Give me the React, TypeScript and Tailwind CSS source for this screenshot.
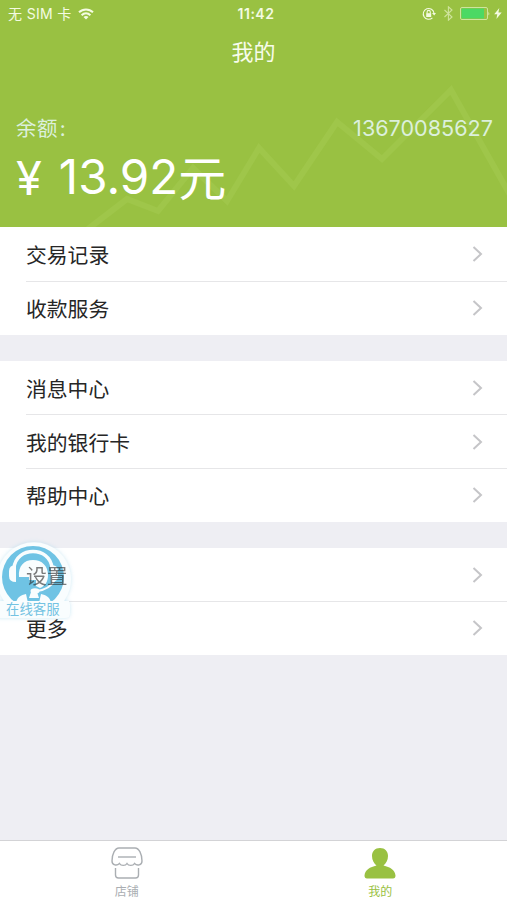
import React from "react";

const cjk = "font-['Inter','Noto_Sans_CJK_SC',sans-serif]";

function Row({
  label,
  height,
  divider,
  raised,
}: {
  label: string;
  height: string;
  divider?: boolean;
  raised?: boolean;
}) {
  return (
    <div className={`flex bg-white pl-[26px] ${height}`}>
      <div
        className={`flex flex-1 items-center justify-between pr-6 ${
          divider ? "border-b border-[#e6e6e8]" : "border-b border-transparent"
        }`}
      >
        <span
          className={`pt-[5px] text-[20.8px] leading-none text-[#262626] ${raised ? "relative z-20 opacity-60" : ""}`}
        >
          {label}
        </span>
        <svg className="h-4 w-[11px]" viewBox="0 0 11 16" fill="none" stroke="#c5c5c8" strokeWidth="2">
          <path d="M1.5 1 L9 8 L1.5 15" />
        </svg>
      </div>
    </div>
  );
}

function StatusBar() {
  return (
    <div className="relative flex h-[27px] items-center justify-between pl-2 pr-[5px] text-[#f4fbe2]">
      <div className="flex items-center gap-[6px]">
        <span className="text-[14px] leading-none tracking-[0.35px]">无 SIM 卡</span>
        <svg className="h-3 w-4" viewBox="0 0 16 12" fill="none" stroke="currentColor" strokeWidth="2">
          <path d="M1 4.3 C5 0.4 11 0.4 15 4.3" />
          <path d="M3.6 7.2 C6.2 4.7 9.8 4.7 12.4 7.2" />
          <path d="M8 11.6 L5.5 9 C7 7.7 9 7.7 10.5 9 Z" fill="currentColor" stroke="none" />
        </svg>
      </div>
      <span className="absolute left-0 w-full pl-[5px] text-center text-[14px] font-semibold leading-none tracking-[0.5px]">
        11:42
      </span>
      <div className="flex items-center">
        <svg className="mr-px h-[14px] w-[15px]" viewBox="0 0 15 14" fill="none" stroke="currentColor" strokeWidth="1.1">
          <path d="M10.4 10.8 A5.4 5.4 0 1 1 12 6.2" />
          <path d="M10 6 L14 6 L12.2 8.6 Z" fill="currentColor" stroke="none" />
          <rect x="4.2" y="6.2" width="5" height="3.8" fill="currentColor" stroke="none" />
          <path d="M5.1 6.5 V5 A1.6 1.6 0 0 1 8.3 5 V6.5" />
        </svg>
        <svg className="ml-[6px] h-[15px] w-[9px] text-[#cfe39c]" viewBox="0 0 9 15" fill="none" stroke="currentColor" strokeWidth="1.1">
          <path d="M0.5 4 L8 11 L4.4 14.2 V0.8 L8 4 L0.5 11" />
        </svg>
        <svg className="ml-[7px] h-[13px] w-[30px]" viewBox="0 0 30 13" fill="none">
          <rect x="0.5" y="0.5" width="27" height="12" rx="1.5" stroke="#cee49f" />
          <rect x="1.5" y="1.5" width="22.5" height="10" fill="#4cd964" />
          <path d="M28.5 4.5 Q30 6.5 28.5 8.5 Z" fill="#e7f3ca" />
        </svg>
        <svg className="ml-[4px] h-[11px] w-[8px]" viewBox="0 0 8 11" fill="currentColor">
          <path d="M5.3 0 L0.2 6.2 H3.3 L2.4 11 L7.7 4.4 H4.4 Z" />
        </svg>
      </div>
    </div>
  );
}

function ServiceBadge() {
  return (
    <div className="absolute left-0 top-[541px] z-10 h-[84px] w-[76px]">
      <svg className="absolute inset-0 h-[84px] w-[76px] overflow-visible" viewBox="0 0 76 84">
        <defs>
          <filter id="glow" x="-20%" y="-20%" width="140%" height="140%">
            <feDropShadow dx="0" dy="0" stdDeviation="2" floodColor="#8fcfe8" floodOpacity="0.45" />
          </filter>
        </defs>
        <path
          d="M-4 60 H4 A37 37 0 1 1 64 60 H66 Q70 60 70 64 V72 Q70 77 65 77 H-4 Z"
          fill="#f9fdfe"
          filter="url(#glow)"
        />
        <circle cx="33" cy="36" r="31" fill="#6fc3e4" />
        {/* face */}
        <path
          d="M19 36 C18 25 24 19 33 19 C42 19 48 25 48 34 C48 41 45 45 40 47 L36 45 V39 H29 V36 Z"
          fill="#f9fdfe"
        />
        {/* collar and shoulders */}
        <path d="M16 62 C17 56 21 54 26 53 L28 62 Z" fill="#f9fdfe" />
        <path d="M51 62 C50 56 46 54 41 53 L39 62 Z" fill="#f9fdfe" />
        <path d="M31 51 H37 L39 57 H29 Z" fill="#f9fdfe" />
        {/* headset */}
        <path d="M14 27 C16 5 50 5 52 27" fill="none" stroke="#f9fdfe" strokeWidth="3.4" />
        <path d="M54 40 Q50 48 37 50" fill="none" stroke="#f9fdfe" strokeWidth="2" />
        <ellipse cx="35" cy="50" rx="4.5" ry="2.8" fill="#f9fdfe" />
        <path d="M16 24 V41 Q9 41 9 35 V30 Q9 24 16 24 Z" fill="#f9fdfe" />
        <path d="M51 24 V41 Q58 41 58 35 V30 Q58 24 51 24 Z" fill="#f9fdfe" />
        <rect x="0" y="60" width="69" height="16" fill="#f9fdfe" />
      </svg>
      <span className="absolute left-[6px] top-[61px] whitespace-nowrap text-[13.4px] leading-[15px] text-[#74c3e2]">
        在线客服
      </span>
    </div>
  );
}

export default function App() {
  return (
    <div className={`relative flex h-[900px] w-[507px] flex-col overflow-hidden bg-[#eeeef3] ${cjk}`}>
      <header className="relative h-[227px] shrink-0 bg-[#99c142]">
        <svg className="absolute inset-0 h-[227px] w-[507px]" viewBox="0 0 507 227" fill="none">
          <path
            d="M88 229 L127 199 L158 211 L193 168 L227 201 L259 148 L294 186 L337 122 L382 159 L451 90 L510 195"
            stroke="#9fc64a"
            strokeWidth="6"
          />
        </svg>
        <div className="relative">
          <StatusBar />
          <h1 className="flex h-[50px] items-center justify-center text-[22px] leading-none text-[#f7fceb]">我的</h1>
          <div className="mt-[41px] flex h-[22px] items-center justify-between pl-4 pr-[14px] leading-none text-[#dcf0dc]">
            <span className="text-[20.5px] tracking-[0.4px]">
              余额<span className="pl-[2px]">:</span>
            </span>
            <span className="text-[21.6px]">13670085627</span>
          </div>
          <div className="mt-[11px] flex h-[52px] items-center pl-4 leading-none text-white">
            <span className="text-[47px]">¥</span>
            <span className="ml-[17px] text-[47.5px]">13.92</span>
            <span className="pt-[3px] text-[48px]">元</span>
          </div>
        </div>
      </header>

      <main className="flex flex-1 flex-col gap-[26px]">
        <section>
          <Row label="交易记录" height="h-[55px]" divider />
          <Row label="收款服务" height="h-[53px]" />
        </section>
        <section>
          <Row label="消息中心" height="h-[54px]" divider />
          <Row label="我的银行卡" height="h-[54px]" divider />
          <Row label="帮助中心" height="h-[53px]" />
        </section>
        <section>
          <Row label="设置" height="h-[54px]" divider raised />
          <Row label="更多" height="h-[53px]" />
        </section>
      </main>

      <nav className="flex h-[60px] shrink-0 border-t border-[#d3d3d6] bg-white text-[12px] leading-none">
        <div className="flex flex-1 flex-col items-center gap-[7px] pt-[6px] text-[#aaaeb2]">
          <svg className="h-8 w-8" viewBox="0 0 32 32" fill="none" stroke="currentColor" strokeWidth="1.4">
            <path d="M8 1 H24 C28 1 31 7 31 14 C31 18.5 26 19 23.5 16.5 C22 19 17.5 19 16 16.5 C14.5 19 10 19 8.5 16.5 C6 19 1 18.5 1 14 C1 7 4 1 8 1 Z" />
            <path d="M7 10 H25" />
            <path d="M4.5 21 V28 Q4.5 31 7.5 31 H24.5 Q27.5 31 27.5 28 V21" />
          </svg>
          <span>店铺</span>
        </div>
        <div className="flex flex-1 flex-col items-center gap-[7px] pt-[6px] text-[#99c142]">
          <svg className="h-8 w-8" viewBox="0 0 32 32" fill="currentColor">
            <path d="M16 1 C21 1 24 4.5 24 9 C24 13 22 16.5 19.5 18.5 C26 20 31 23 31.5 28.5 Q31.5 31.5 29 31.5 H3 Q0.5 31.5 0.5 28.5 C1 23 6 20 12.5 18.5 C10 16.5 8 13 8 9 C8 4.5 11 1 16 1 Z" />
          </svg>
          <span>我的</span>
        </div>
      </nav>

      <ServiceBadge />
    </div>
  );
}
